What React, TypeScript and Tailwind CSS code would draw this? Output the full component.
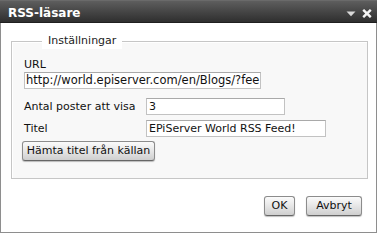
import React from "react";

const font = { fontFamily: '"DejaVu Sans", Verdana, sans-serif' };

function Btn({ children, className = "" }: { children: React.ReactNode; className?: string }) {
  return (
    <button
      className={
        "h-[20px] rounded-[3px] border border-[#8c8c8c] border-b-[#666] bg-gradient-to-b from-[#fbfbfb] via-[#e6e6e6] to-[#cfcfcf] text-[11px] leading-[14px] text-[#111] shadow-[0_1px_1px_rgba(0,0,0,0.25)] " +
        className
      }
    >
      {children}
    </button>
  );
}

export default function App() {
  return (
    <div className="w-[377px] h-[233px] flex flex-col bg-white" style={font}>
      <div className="h-[23px] flex items-start justify-between bg-gradient-to-b from-[#5e5e5e] to-[#2f2f2f] border-t border-t-[#6a6a6a] border-b border-b-[#1f1f1f]">
        <span className="pl-[8px] pt-[5px] text-[12px] leading-[14px] font-bold text-white">RSS-läsare</span>
        <div className="flex items-center gap-[6px] pr-[5px] pt-[8px]">
          <svg width="10" height="6" viewBox="0 0 10 6">
            <path d="M0.5 0.5 L9.5 0.5 L5 5.2 Z" fill="#d8d8d8" />
          </svg>
          <svg width="10" height="9" viewBox="0 0 10 9">
            <path d="M1.2 0.8 L8.8 8.2 M8.8 0.8 L1.2 8.2" stroke="#f4f4f4" strokeWidth="2.4" />
          </svg>
        </div>
      </div>
      <div className="flex-1 flex flex-col border-x border-b border-[#8e8e8e] border-t-0">
        <fieldset className="ml-[10px] mt-[10px] w-[357px] border border-[#c6c6c6] bg-[#f8f8f8] pl-[12px] pr-[8px] pb-[17px] pt-[9px] shadow-[inset_1px_1px_0_#fff]">
          <legend className="ml-[18px] px-[6px] bg-white text-[11px] leading-[16px] text-[#222]">Inställningar</legend>
          <div className="text-[11px] leading-[14px] text-[#111]">URL</div>
          <div className="w-[237px] h-[17px] border border-[#c2c2c2] border-t-[#a9a9a9] bg-white pl-[1px] text-[11.5px] leading-[15px] text-[#111] overflow-hidden whitespace-nowrap">
            http://world.episerver.com/en/Blogs/?fee
          </div>
          <div className="mt-[9px] flex items-center h-[17px]">
            <span className="w-[122px] text-[11px] leading-[14px] text-[#111]">Antal poster att visa</span>
            <div className="w-[139px] h-[17px] border border-[#c2c2c2] border-t-[#a9a9a9] bg-white pl-[2px] text-[11px] leading-[15px] text-[#111]">3</div>
          </div>
          <div className="mt-[5px] flex items-center h-[17px]">
            <span className="w-[122px] text-[11px] leading-[14px] text-[#111]">Titel</span>
            <div className="w-[180px] h-[17px] border border-[#c2c2c2] border-t-[#a9a9a9] bg-white pl-[2px] text-[11px] leading-[15px] text-[#111] whitespace-nowrap">
              EPiServer World RSS Feed!
            </div>
          </div>
          <Btn className="mt-[1px] -ml-[2px] w-[133px]">Hämta titel från källan</Btn>
        </fieldset>
        <div className="mt-[17px] flex justify-end gap-[11px] pr-[14px]">
          <Btn className="w-[31px]">OK</Btn>
          <Btn className="w-[56px]">Avbryt</Btn>
        </div>
      </div>
    </div>
  );
}
